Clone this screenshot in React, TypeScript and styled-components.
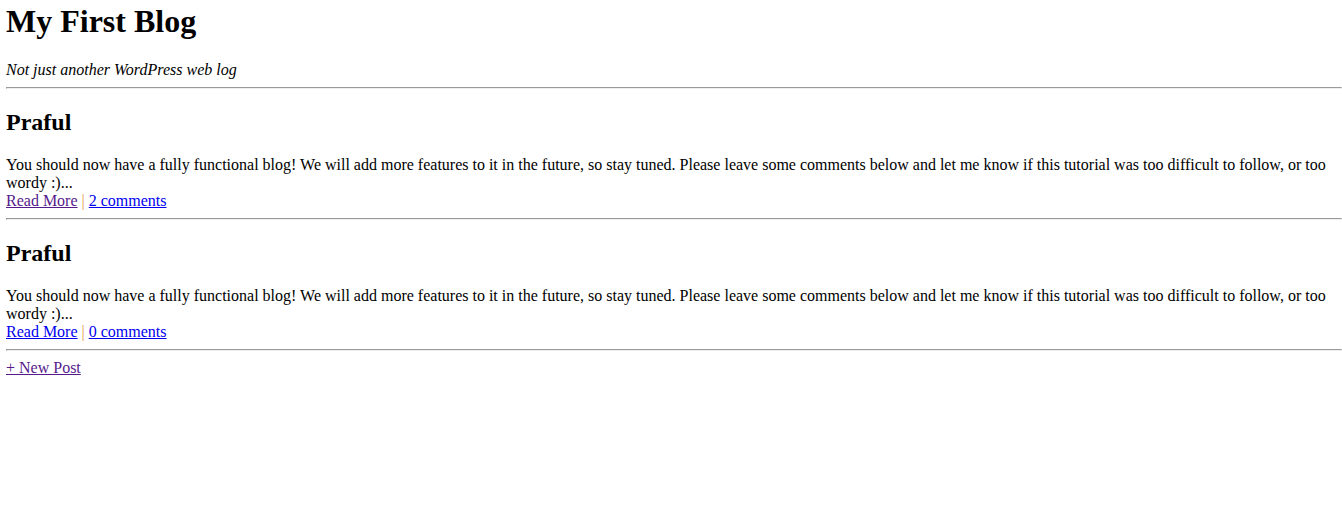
import React from "react";
import styled, { createGlobalStyle } from "styled-components";

const GlobalStyle = createGlobalStyle`
  body {
    margin: 0;
    background: #fff;
    color: #000;
    font-family: "Liberation Serif", "Times New Roman", serif;
    font-size: 16px;
    line-height: 18px;
  }
`;

const Page = styled.main`
  padding: 3px 0 8px 6px;
`;

const SiteTitle = styled.h1`
  margin: 0 0 21px;
  font-size: 32px;
  line-height: 37px;
`;

const Tagline = styled.em`
  display: block;
`;

const Divider = styled.hr`
  margin: 8px 0;
  border: 1px solid;
  border-color: #9a9a9a #eeeeee #eeeeee #9a9a9a;
`;

const PostTitle = styled.h2`
  margin: 20px 0;
  font-size: 24px;
  line-height: 27px;
`;

const Excerpt = styled.p`
  margin: 0;
`;

const PostLinks = styled.div``;

const Separator = styled.span`
  color: #e39a4a;
`;

const TextLink = styled.a<{ $visited?: boolean }>`
  color: ${({ $visited }) => ($visited ? "#551a8b" : "#0000ee")};
  text-decoration: underline;
`;

const posts = [
  { id: 2, author: "Praful", comments: 2, read: true },
  { id: 1, author: "Praful", comments: 0, read: false },
];

const excerpt =
  "You should now have a fully functional blog! We will add more features to it in the future, so stay tuned. Please leave some comments below and let me know if this tutorial was too difficult to follow, or too wordy :)...";

export default function App() {
  return (
    <>
      <GlobalStyle />
      <Page>
        <SiteTitle>My First Blog</SiteTitle>
        <Tagline>Not just another WordPress web log</Tagline>
        <Divider />
        {posts.map((post) => (
          <article key={post.id}>
            <PostTitle>{post.author}</PostTitle>
            <Excerpt>{excerpt}</Excerpt>
            <PostLinks>
              <TextLink href={`#post-${post.id}`} $visited={post.read}>
                Read More
              </TextLink>
              <Separator>{" | "}</Separator>
              <TextLink href={`#comments-${post.id}`}>{`${post.comments} comments`}</TextLink>
            </PostLinks>
            <Divider />
          </article>
        ))}
        <TextLink href="#new-post" $visited>
          + New Post
        </TextLink>
      </Page>
    </>
  );
}
